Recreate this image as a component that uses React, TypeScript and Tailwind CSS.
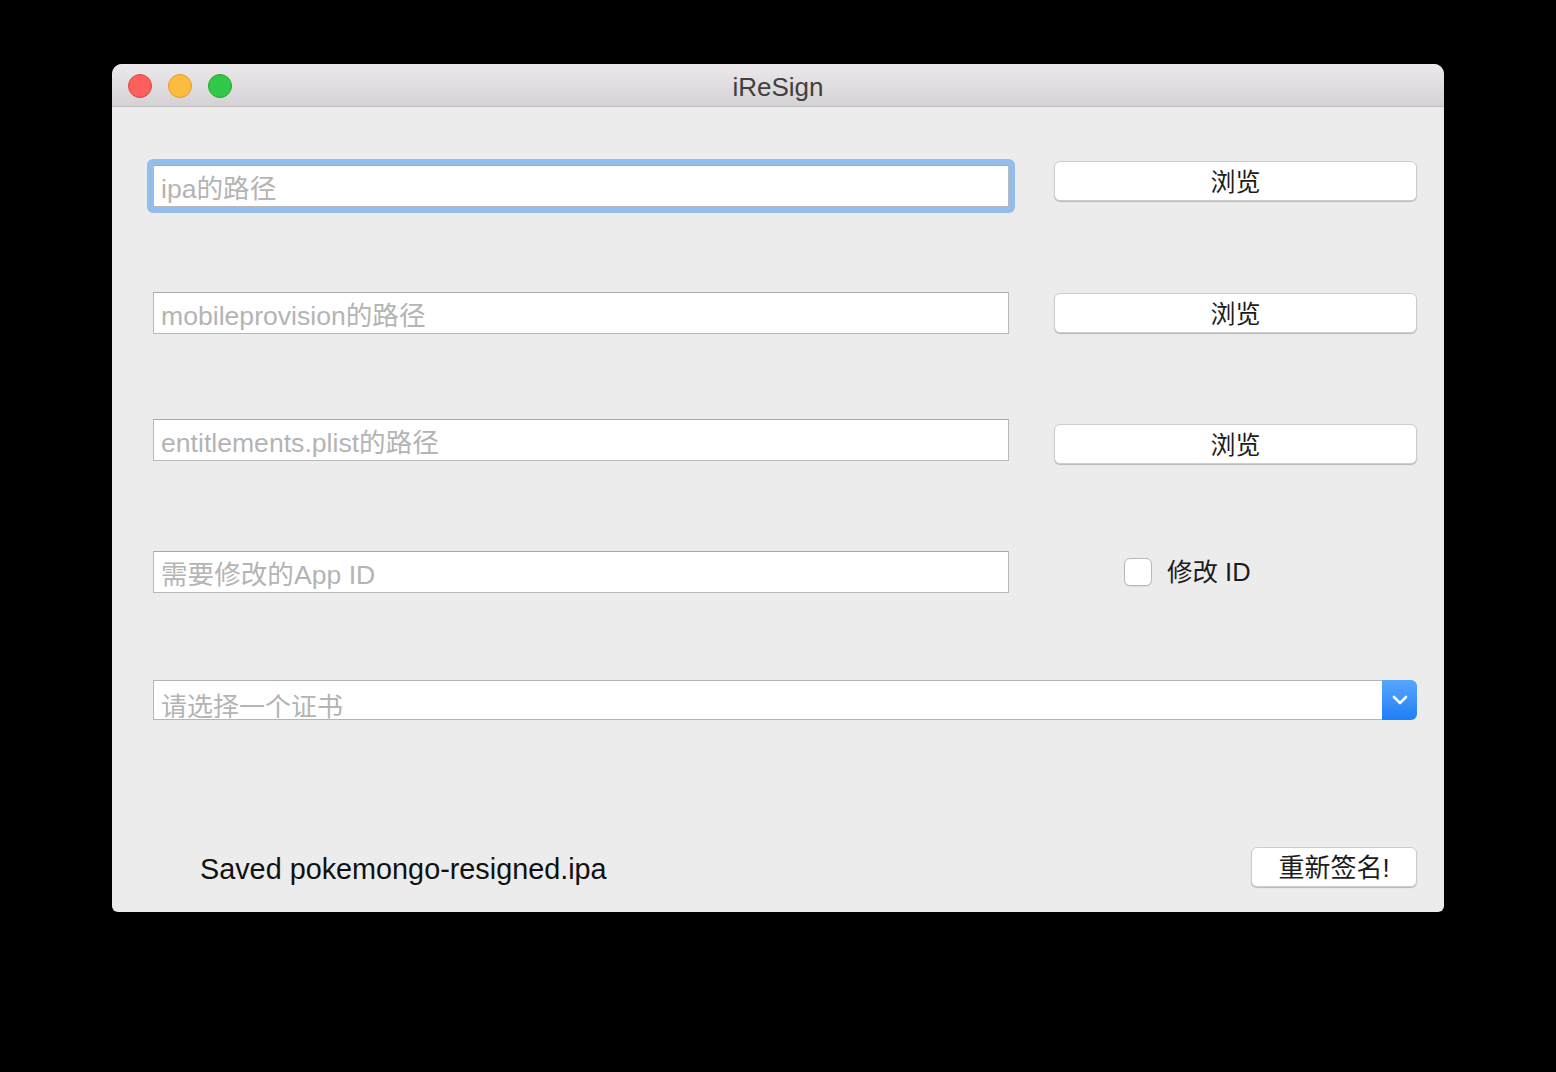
import React from 'react';

const ui = { fontFamily: '"Liberation Sans", "Noto Sans CJK SC", sans-serif' };

function Field({ placeholder, focused = false }: { placeholder: string; focused?: boolean }) {
    return (
        <div
            className={[
                'flex h-[42px] w-[856px] shrink-0 items-end overflow-hidden border border-[#b9b9b9] border-t-[#a9a9a9] bg-white pb-[2px] pl-[7px]',
                focused ? 'rounded-[2px] shadow-[0_0_0_6px_#93bdec]' : '',
            ].join(' ')}
        >
            <span className="text-[26.6px] leading-[30px] text-[#b4b4b4]">{placeholder}</span>
        </div>
    );
}

function PushButton({ label, className = '' }: { label: string; className?: string }) {
    return (
        <button
            className={
                'flex h-[40px] items-center justify-center rounded-[6px] border border-[#cdcdcd] bg-white pt-[2px] text-[25px] leading-none text-[#1c1c1c] shadow-[0_1px_1px_rgba(0,0,0,0.22)] ' +
                className
            }
        >
            {label}
        </button>
    );
}

export default function App() {
    return (
        <div className="min-h-[1072px] w-full bg-black pl-[112px] pt-[64px]" style={ui}>
            <div className="flex w-[1332px] flex-col overflow-hidden rounded-t-[10px] rounded-b-[6px] bg-[#ececec]">
                {/* title bar */}
                <div className="relative flex h-[43px] items-center border-b border-[#bdbbbd] bg-gradient-to-b from-[#ebe9eb] to-[#d4d2d4] pl-[16px]">
                    <div className="mt-[2px] flex gap-[16px]">
                        <span className="h-[24px] w-[24px] rounded-full border border-[#e0443e] bg-[#fc605c]" />
                        <span className="h-[24px] w-[24px] rounded-full border border-[#dea123] bg-[#fdbc40]" />
                        <span className="h-[24px] w-[24px] rounded-full border border-[#1aab29] bg-[#34c84a]" />
                    </div>
                    <div className="absolute inset-x-0 top-0 flex h-full items-center justify-center pt-[4px] text-[26px] text-[#404040]">
                        iReSign
                    </div>
                </div>

                <div className="flex flex-col pb-[25px] pl-[41px] pr-[27px] pt-[54px]">
                    {/* row 1 */}
                    <div className="flex items-start gap-[45px]">
                        <div className="mt-[4px]">
                            <Field placeholder="ipa的路径" focused />
                        </div>
                        <PushButton label="浏览" className="w-[363px]" />
                    </div>

                    {/* row 2 */}
                    <div className="mt-[85px] flex items-start gap-[45px]">
                        <Field placeholder="mobileprovision的路径" />
                        <PushButton label="浏览" className="mt-[1px] w-[363px]" />
                    </div>

                    {/* row 3 */}
                    <div className="mt-[85px] flex items-start gap-[45px]">
                        <Field placeholder="entitlements.plist的路径" />
                        <PushButton label="浏览" className="mt-[5px] w-[363px]" />
                    </div>

                    {/* row 4 */}
                    <div className="mt-[87px] flex items-center">
                        <Field placeholder="需要修改的App ID" />
                        <label className="ml-[115px] flex items-center gap-[15px]">
                            <span className="h-[28px] w-[28px] rounded-[6px] border border-[#b8b8b8] bg-white shadow-[0_1px_1px_rgba(0,0,0,0.08)]" />
                            <span className="pt-[2px] text-[25.5px] leading-none text-[#1c1c1c]">修改 ID</span>
                        </label>
                    </div>

                    {/* row 5: certificate select */}
                    <div className="mt-[87px] flex h-[40px] w-full">
                        <div className="flex flex-1 items-start overflow-hidden border border-r-0 border-[#b4b4b4] bg-white pl-[7px] pt-[9px]">
                            <span className="text-[26px] leading-[34px] text-[#b4b4b4]">请选择一个证书</span>
                        </div>
                        <div className="flex w-[35px] items-center justify-center rounded-r-[6px] bg-gradient-to-b from-[#56a6fc] to-[#1d7ef6]">
                            <svg width="16" height="10" viewBox="0 0 16 10" fill="none">
                                <path d="M2 2 L8 8 L14 2" stroke="white" strokeWidth="2.6" strokeLinecap="round" strokeLinejoin="round" />
                            </svg>
                        </div>
                    </div>

                    {/* bottom */}
                    <div className="mt-[127px] flex h-[40px] items-center justify-between">
                        <span className="ml-[47px] mt-[4px] text-[28.8px] leading-none text-[#111]">
                            Saved pokemongo-resigned.ipa
                        </span>
                        <PushButton label="重新签名!" className="w-[166px] text-[26px]" />
                    </div>
                </div>
            </div>
        </div>
    );
}
